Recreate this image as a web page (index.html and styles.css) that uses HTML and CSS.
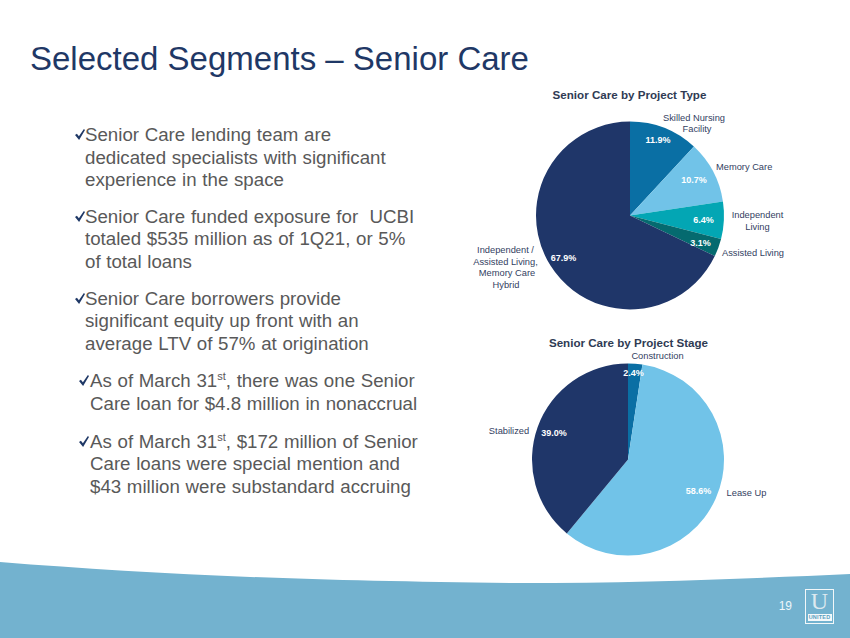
FILE: index.html
```html
<!DOCTYPE html>
<html lang="en">
<head>
<meta charset="utf-8">
<title>Selected Segments – Senior Care</title>
<link rel="stylesheet" href="styles.css">
</head>
<body>
<div class="slide">
  <header class="header">
    <h1 class="title">Selected Segments – Senior Care</h1>
  </header>
  <main class="main">
    <section class="points">
      <ul class="list">
        <li class="item">
          <svg class="check" viewBox="0 0 10 11"><path d="M0 6.1 L1.9 4.7 L3.9 7.3 L8.9 0 L10 0.9 L4.1 11 Z"/></svg>
          <p class="text">Senior Care lending team are<br>dedicated specialists with significant<br>experience in the space</p>
        </li>
        <li class="item">
          <svg class="check" viewBox="0 0 10 11"><path d="M0 6.1 L1.9 4.7 L3.9 7.3 L8.9 0 L10 0.9 L4.1 11 Z"/></svg>
          <p class="text">Senior Care funded exposure for&nbsp; UCBI<br>totaled $535 million as of 1Q21, or 5%<br>of total loans</p>
        </li>
        <li class="item">
          <svg class="check" viewBox="0 0 10 11"><path d="M0 6.1 L1.9 4.7 L3.9 7.3 L8.9 0 L10 0.9 L4.1 11 Z"/></svg>
          <p class="text">Senior Care borrowers provide<br>significant equity up front with an<br>average LTV of 57% at origination</p>
        </li>
        <li class="item item-wide">
          <svg class="check" viewBox="0 0 10 11"><path d="M0 6.1 L1.9 4.7 L3.9 7.3 L8.9 0 L10 0.9 L4.1 11 Z"/></svg>
          <p class="text">As of March 31<sup class="ord">st</sup>, there was one Senior<br>Care loan for $4.8 million in nonaccrual</p>
        </li>
        <li class="item item-wide">
          <svg class="check" viewBox="0 0 10 11"><path d="M0 6.1 L1.9 4.7 L3.9 7.3 L8.9 0 L10 0.9 L4.1 11 Z"/></svg>
          <p class="text">As of March 31<sup class="ord">st</sup>, $172 million of Senior<br>Care loans were special mention and<br>$43 million were substandard accruing</p>
        </li>
      </ul>
    </section>
    <section class="charts">
      <svg class="chart chart-type" viewBox="460 85 340 235">
        <text class="ctitle" x="629.5" y="99.2">Senior Care by Project Type</text>
        <path class="s-mid" d="M630 215.5 L630 121.5 A94 94 0 0 1 693.92 146.58 Z"/>
        <path class="s-light" d="M630 215.5 L693.92 146.58 A94 94 0 0 1 722.93 201.38 Z"/>
        <path class="s-teal" d="M630 215.5 L722.93 201.38 A94 94 0 0 1 721.05 238.88 Z"/>
        <path class="s-dteal" d="M630 215.5 L721.05 238.88 A94 94 0 0 1 714.80 256.06 Z"/>
        <path class="s-navy" d="M630 215.5 L714.80 256.06 A94 94 0 1 1 630 121.5 Z"/>
        <text class="val" x="658" y="143.3">11.9%</text>
        <text class="val" x="694" y="183.3">10.7%</text>
        <text class="val" x="703.5" y="223.3">6.4%</text>
        <text class="val" x="700.5" y="246.3">3.1%</text>
        <text class="val" x="563.5" y="261.3">67.9%</text>
        <text class="lbl" x="694" y="120.5">Skilled Nursing</text>
        <text class="lbl" x="697" y="132">Facility</text>
        <text class="lbl lbl-start" x="716" y="170.3">Memory Care</text>
        <text class="lbl" x="757.5" y="218.3">Independent</text>
        <text class="lbl" x="757.5" y="229.8">Living</text>
        <text class="lbl lbl-start" x="722" y="256.3">Assisted Living</text>
        <text class="lbl" x="505.5" y="253.3">Independent /</text>
        <text class="lbl" x="505.5" y="265">Assisted Living,</text>
        <text class="lbl" x="507" y="276.3">Memory Care</text>
        <text class="lbl" x="506" y="287.5">Hybrid</text>
      </svg>
      <svg class="chart chart-stage" viewBox="460 335 340 220">
        <text class="ctitle" x="628.5" y="347.2">Senior Care by Project Stage</text>
        <path class="s-mid" d="M628 459.5 L628 363.5 A96 96 0 0 1 642.42 364.59 Z"/>
        <path class="s-light" d="M628 459.5 L642.42 364.59 A96 96 0 1 1 566.81 533.47 Z"/>
        <path class="s-navy" d="M628 459.5 L566.81 533.47 A96 96 0 0 1 628 363.5 Z"/>
        <text class="lbl" x="657.5" y="359.3">Construction</text>
        <text class="val" x="633.5" y="376.3">2.4%</text>
        <text class="lbl" x="509" y="434.3">Stabilized</text>
        <text class="val" x="554" y="436.3">39.0%</text>
        <text class="val" x="698.5" y="494.3">58.6%</text>
        <text class="lbl" x="746.5" y="496.3">Lease Up</text>
      </svg>
    </section>
  </main>
  <footer class="footer">
    <svg class="wave" viewBox="0 0 850 82" preserveAspectRatio="none">
      <path d="M0 6 C150 18 300 25 520 27 C650 27 760 22 850 18 L850 82 L0 82 Z"/>
    </svg>
    <span class="page-num">19</span>
    <div class="logo">
      <span class="logo-u">U</span>
      <span class="logo-name">UNITED</span>
    </div>
  </footer>
</div>
</body>
</html>
```
FILE: styles.css
```css
* { box-sizing: border-box; }
html, body { margin: 0; padding: 0; background: #fff; }
.slide {
  width: 850px;
  height: 638px;
  overflow: hidden;
  display: flex;
  flex-direction: column;
  font-family: "Liberation Sans", Arial, sans-serif;
  background: #fff;
}
.header {
  height: 76px;
  padding: 41px 0 0 30px;
  flex: none;
}
.title {
  margin: 0;
  font-size: 33px;
  line-height: 35px;
  font-weight: normal;
  color: #1f3866;
  white-space: nowrap;
}
.main {
  flex: 1;
  display: flex;
  min-height: 0;
}
.points {
  width: 460px;
  padding: 48px 0 0 75px;
  flex: none;
}
.list {
  list-style: none;
  margin: 0;
  padding: 0;
  display: flex;
  flex-direction: column;
  gap: 14px;
}
.item {
  display: flex;
  align-items: flex-start;
}
.item-wide { margin-top: 1px; }
.check {
  flex: none;
  width: 10px;
  height: 11px;
  margin-top: 5px;
  fill: #1f3866;
}
.item-wide .check { margin-left: 4px; margin-right: 1px; }
.text {
  margin: 0;
  font-size: 18.7px;
  line-height: 22.6px;
  color: #595959;
  word-spacing: 0.5px;
  white-space: nowrap;
}
.ord {
  font-size: 11px;
  line-height: 0;
  vertical-align: 7px;
}
.charts {
  width: 340px;
  flex: none;
  padding-top: 9px;
  display: flex;
  flex-direction: column;
  gap: 15px;
}
.chart { display: block; overflow: visible; }
.chart-type { width: 340px; height: 235px; }
.chart-stage { width: 340px; height: 220px; }
.ctitle {
  font-family: "Liberation Sans", Arial, sans-serif;
  font-size: 11.6px;
  font-weight: bold;
  fill: #2f3b54;
  text-anchor: middle;
}
.lbl {
  font-family: "Liberation Sans", Arial, sans-serif;
  font-size: 9.3px;
  fill: #33415f;
  text-anchor: middle;
}
.lbl-start { text-anchor: start; }
.val {
  font-family: "Liberation Sans", Arial, sans-serif;
  font-size: 9px;
  font-weight: bold;
  fill: #ffffff;
  text-anchor: middle;
}
.s-mid { fill: #0a6fa4; }
.s-light { fill: #71c3e8; }
.s-teal { fill: #03a6b4; }
.s-dteal { fill: #056a6f; }
.s-navy { fill: #1f3669; }
.footer {
  height: 82px;
  flex: none;
  position: relative;
  isolation: isolate;
  display: flex;
  justify-content: flex-end;
  align-items: flex-start;
  gap: 13px;
  padding: 33px 16px 0 0;
}
.wave {
  position: absolute;
  left: 0;
  top: 0;
  width: 850px;
  height: 82px;
  z-index: -1;
  fill: #73b2cf;
}
.page-num {
  margin-top: 10px;
  font-size: 12px;
  line-height: 14px;
  color: #eef6fa;
}
.logo {
  width: 29px;
  height: 35px;
  border: 1.5px solid #f2f7f9;
  display: flex;
  flex-direction: column;
  align-items: center;
  justify-content: space-between;
  padding: 1px 1.5px 2px;
}
.logo-u {
  font-family: "Liberation Serif", "Times New Roman", serif;
  font-size: 24px;
  line-height: 21px;
  height: 21px;
  color: #dde9ef;
}
.logo-name {
  width: 100%;
  background: #f5f9fb;
  color: #5b9ec0;
  font-size: 5.5px;
  font-weight: bold;
  line-height: 7px;
  text-align: center;
  letter-spacing: 0.2px;
}
```
